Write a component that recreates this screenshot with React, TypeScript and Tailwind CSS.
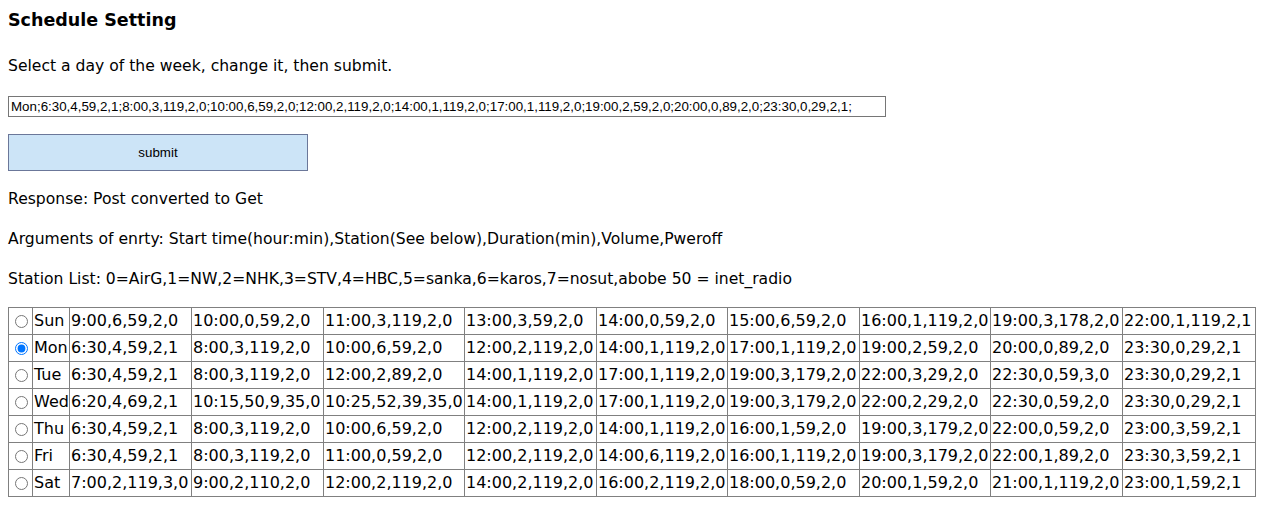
import { useState } from 'react';

const DAYS = ['Sun', 'Mon', 'Tue', 'Wed', 'Thu', 'Fri', 'Sat'];

const SCHEDULE: string[][] = [
  ['9:00,6,59,2,0', '10:00,0,59,2,0', '11:00,3,119,2,0', '13:00,3,59,2,0', '14:00,0,59,2,0', '15:00,6,59,2,0', '16:00,1,119,2,0', '19:00,3,178,2,0', '22:00,1,119,2,1'],
  ['6:30,4,59,2,1', '8:00,3,119,2,0', '10:00,6,59,2,0', '12:00,2,119,2,0', '14:00,1,119,2,0', '17:00,1,119,2,0', '19:00,2,59,2,0', '20:00,0,89,2,0', '23:30,0,29,2,1'],
  ['6:30,4,59,2,1', '8:00,3,119,2,0', '12:00,2,89,2,0', '14:00,1,119,2,0', '17:00,1,119,2,0', '19:00,3,179,2,0', '22:00,3,29,2,0', '22:30,0,59,3,0', '23:30,0,29,2,1'],
  ['6:20,4,69,2,1', '10:15,50,9,35,0', '10:25,52,39,35,0', '14:00,1,119,2,0', '17:00,1,119,2,0', '19:00,3,179,2,0', '22:00,2,29,2,0', '22:30,0,59,2,0', '23:30,0,29,2,1'],
  ['6:30,4,59,2,1', '8:00,3,119,2,0', '10:00,6,59,2,0', '12:00,2,119,2,0', '14:00,1,119,2,0', '16:00,1,59,2,0', '19:00,3,179,2,0', '22:00,0,59,2,0', '23:00,3,59,2,1'],
  ['6:30,4,59,2,1', '8:00,3,119,2,0', '11:00,0,59,2,0', '12:00,2,119,2,0', '14:00,6,119,2,0', '16:00,1,119,2,0', '19:00,3,179,2,0', '22:00,1,89,2,0', '23:30,3,59,2,1'],
  ['7:00,2,119,3,0', '9:00,2,110,2,0', '12:00,2,119,2,0', '14:00,2,119,2,0', '16:00,2,119,2,0', '18:00,0,59,2,0', '20:00,1,59,2,0', '21:00,1,119,2,0', '23:00,1,59,2,1'],
];

const toLine = (i: number) => `${DAYS[i]};${SCHEDULE[i].join(';')};`;

export default function App() {
  const [day, setDay] = useState(1);
  const [text, setText] = useState(toLine(1));

  const pick = (i: number) => {
    setDay(i);
    setText(toLine(i));
  };

  return (
    <div className="px-2 pt-2 text-black bg-white font-['DejaVu_Sans',sans-serif] text-[16px]">
      {/* Title */}
      <h3 className="font-bold text-[17.5px] leading-[24px]">Schedule Setting</h3>

      <p className="mt-[24px] leading-[20px] text-[15.6px]">Select a day of the week, change it, then submit.</p>

      <input
        type="text"
        value={text}
        onChange={(e) => setText(e.target.value)}
        className="block mt-[20px] w-[878px] h-[21px] px-[2px] border border-[#767676] font-['Liberation_Sans',Arial,sans-serif] text-[13.33px] text-black outline-none"
      />

      <button
        type="button"
        className="block mt-[17px] w-[300px] h-[37px] bg-[#cce4f7] border border-[#6b7799] font-['Liberation_Sans',Arial,sans-serif] text-[13.33px] text-black"
      >
        submit
      </button>

      <p className="mt-[18px] leading-[20px] text-[15.6px]">Response: Post converted to Get</p>
      <p className="mt-[20px] leading-[20px] text-[15.6px]">
        Arguments of enrty: Start time(hour:min),Station(See below),Duration(min),Volume,Pweroff
      </p>
      <p className="mt-[20px] leading-[20px] text-[15.6px]">
        Station List: 0=AirG,1=NW,2=NHK,3=STV,4=HBC,5=sanka,6=karos,7=nosut,abobe 50 = inet_radio
      </p>

      {/* Weekly schedule */}
      <table className="mt-[18px] border-collapse table-fixed w-[1247px]">
        <colgroup>
          <col className="w-[24px]" />
          <col className="w-[37px]" />
          <col className="w-[122px]" />
          <col className="w-[132px]" />
          <col className="w-[141px]" />
          <col className="w-[132px]" />
          <col className="w-[131px]" />
          <col className="w-[132px]" />
          <col className="w-[131px]" />
          <col className="w-[132px]" />
          <col className="w-[133px]" />
        </colgroup>
        <tbody>
          {SCHEDULE.map((row, i) => (
            <tr key={DAYS[i]}>
              <td className="border border-[#808080] p-0 h-[27px] align-middle">
                <input
                  type="radio"
                  name="day"
                  checked={day === i}
                  onChange={() => pick(i)}
                  className="block ml-[6px] w-[13px] h-[13px] accent-[#0075ff]"
                />
              </td>
              <td className="border border-[#808080] px-[1px] py-0 leading-[26px] whitespace-nowrap">{DAYS[i]}</td>
              {row.map((cell, j) => (
                <td key={j} className="border border-[#808080] px-[1px] py-0 leading-[26px] whitespace-nowrap">
                  {cell}
                </td>
              ))}
            </tr>
          ))}
        </tbody>
      </table>
    </div>
  );
}
